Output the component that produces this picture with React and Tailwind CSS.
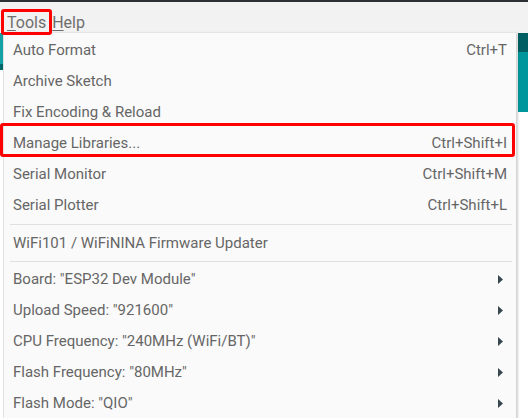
import React from 'react';

const groups = [
  [
    { label: 'Auto Format', shortcut: 'Ctrl+T' },
    { label: 'Archive Sketch' },
    { label: 'Fix Encoding & Reload' },
    { label: 'Manage Libraries...', shortcut: 'Ctrl+Shift+I' },
    { label: 'Serial Monitor', shortcut: 'Ctrl+Shift+M' },
    { label: 'Serial Plotter', shortcut: 'Ctrl+Shift+L' },
  ],
  [{ label: 'WiFi101 / WiFiNINA Firmware Updater' }],
  [
    { label: 'Board: "ESP32 Dev Module"', sub: true },
    { label: 'Upload Speed: "921600"', sub: true },
    { label: 'CPU Frequency: "240MHz (WiFi/BT)"', sub: true },
    { label: 'Flash Frequency: "80MHz"', sub: true },
    { label: 'Flash Mode: "QIO"', sub: true },
  ],
];

function Arrow() {
  return (
    <svg width="5" height="9" viewBox="0 0 5 9" className="mr-[4px]">
      <path d="M0 0 L5 4.5 L0 9 Z" fill="#37474f" />
    </svg>
  );
}

function MenuItem({ item }) {
  return (
    <div className="h-[31px] flex items-center justify-between pl-[9px] pr-[9px]">
      <span>{item.label}</span>
      {item.shortcut && <span>{item.shortcut}</span>}
      {item.sub && <Arrow />}
    </div>
  );
}

export default function App() {
  return (
    <div
      className="relative w-[528px] h-[418px] overflow-hidden bg-white text-[15px] text-[#666666]"
      style={{ fontFamily: 'Roboto, "Noto Sans", sans-serif' }}
    >
      {/* Window chrome behind the menu */}
      <div className="h-[2px] bg-[#2b2e33]" />
      <div className="h-[31px] bg-[#f2f2f2] flex items-start pl-[7px] gap-[6px] pt-[11px] text-[16px] leading-[19px] text-[#6e6e6e]">
        <span>
          <span className="underline underline-offset-2">T</span>ools
        </span>
        <span>
          <span className="underline underline-offset-2">H</span>elp
        </span>
      </div>
      <div className="flex h-[385px]">
        <div className="w-[3px] flex flex-col">
          <div className="h-[31px] bg-[#14a0a4]" />
          <div className="h-[6px] bg-[#00676b]" />
        </div>
        <div className="flex-1" />
        <div className="w-[10px] flex flex-col">
          <div className="h-[19px] bg-[#005f63]" />
          <div className="h-[60px] bg-[#00979c]" />
        </div>
      </div>

      {/* Tools dropdown */}
      <div className="absolute left-[3px] top-[33px] w-[513px] pt-[2px] bg-[#fafafa] border-l border-[#e2e2e2] shadow-[2px_0_2px_rgba(0,0,0,0.18)]">
        {groups.map((group, gi) => (
          <div key={gi}>
            {gi === 1 && (
              <div className="h-[7px] flex items-center pl-[6px] pr-[4px]">
                <div className="h-px w-full bg-[#e0e0e0]" />
              </div>
            )}
            {gi === 2 && (
              <div className="h-[5px] flex items-center pl-[6px] pr-[4px]">
                <div className="h-px w-full bg-[#e0e0e0]" />
              </div>
            )}
            {group.map((item) => (
              <MenuItem key={item.label} item={item} />
            ))}
          </div>
        ))}
      </div>

      {/* Highlight boxes */}
      <div className="absolute left-[1px] top-[9px] w-[51px] h-[26px] border-[3px] border-[#ff0000] rounded-[3px]" />
      <div className="absolute left-0 top-[123px] w-[515px] h-[34px] border-[3px] border-[#ff0000] rounded-[3px]" />
    </div>
  );
}
